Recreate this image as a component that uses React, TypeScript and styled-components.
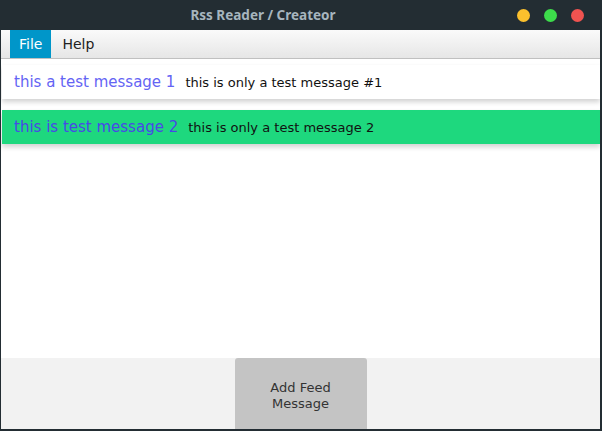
import React from "react";
import styled, { createGlobalStyle } from "styled-components";

const Global = createGlobalStyle`
  html, body { margin: 0; padding: 0; background: #232d33; }
  body { font-family: "DejaVu Sans", "Liberation Sans", sans-serif; }
`;

const Window = styled.div`
  width: 602px;
  height: 431px;
  box-sizing: border-box;
  display: flex;
  flex-direction: column;
  background: #232d33;
  border-left: 1px solid #232d33;
  border-right: 2px solid #232d33;
  border-bottom: 2px solid #232d33;
  overflow: hidden;
`;

const TitleBar = styled.div`
  height: 30px;
  flex: none;
  display: flex;
  align-items: center;
`;

const TitleText = styled.div`
  flex: 1;
  text-align: center;
  padding-left: 8px;
  color: #a7b5be;
  font-family: "Noto Sans", "DejaVu Sans", sans-serif;
  font-weight: bold;
  font-size: 13.5px;
`;

const Lights = styled.div`
  display: flex;
  gap: 14px;
  padding: 0 16px 0 0;
`;

const Light = styled.span<{ $c: string }>`
  width: 13px;
  height: 13px;
  border-radius: 50%;
  background: ${(p) => p.$c};
`;

const MenuBar = styled.div`
  height: 28px;
  flex: none;
  display: flex;
  align-items: stretch;
  padding-left: 9px;
  background: linear-gradient(#fafafa, #e6e6e6);
  border-bottom: 1px solid #c0c0c0;
`;

const MenuItem = styled.div<{ $active?: boolean }>`
  display: flex;
  align-items: center;
  padding: ${(p) => (p.$active ? "0 9px 0 9px" : "0 10px 0 11px")};
  font-size: 14px;
  color: ${(p) => (p.$active ? "#ffffff" : "#222222")};
  background: ${(p) => (p.$active ? "#0096c9" : "transparent")};
`;

const Content = styled.div`
  flex: 1;
  background: #ffffff;
  display: flex;
  flex-direction: column;
  gap: 11px;
  padding: 6px 0 0 1px;
`;

const Row = styled.div<{ $selected?: boolean }>`
  height: 34px;
  display: flex;
  align-items: center;
  padding-left: 12px;
  background: ${(p) => (p.$selected ? "#1ed87e" : "#ffffff")};
  box-shadow: 0 3px 5px rgba(0, 0, 0, 0.18);
`;

const Title = styled.span<{ $selected?: boolean }>`
  font-size: 15px;
  color: ${(p) => (p.$selected ? "#4848e6" : "#6464f4")};
  margin-right: 10px;
`;

const Desc = styled.span`
  font-size: 13px;
  color: #111111;
`;

const BottomBar = styled.div`
  height: 71px;
  flex: none;
  background: #f2f2f2;
  display: flex;
  justify-content: center;
`;

const Button = styled.div`
  width: 132px;
  background: #c4c4c4;
  border-radius: 3px 3px 0 0;
  display: flex;
  align-items: center;
  justify-content: center;
  text-align: center;
  font-size: 13px;
  line-height: 16px;
  color: #333333;
  padding-top: 5px;
  box-sizing: border-box;
`;

export default function App() {
  return (
    <>
      <Global />
      <Window>
        <TitleBar>
          <TitleText>Rss Reader / Createor</TitleText>
          <Lights>
            <Light $c="#fbc02d" />
            <Light $c="#3ddc4b" />
            <Light $c="#ef5350" />
          </Lights>
        </TitleBar>
        <MenuBar>
          <MenuItem $active>File</MenuItem>
          <MenuItem>Help</MenuItem>
        </MenuBar>
        <Content>
          <Row>
            <Title>this a test message 1</Title>
            <Desc>this is only a test message #1</Desc>
          </Row>
          <Row $selected>
            <Title $selected>this is test message 2</Title>
            <Desc>this is only a test message 2</Desc>
          </Row>
        </Content>
        <BottomBar>
          <Button>
            Add Feed
            <br />
            Message
          </Button>
        </BottomBar>
      </Window>
    </>
  );
}
